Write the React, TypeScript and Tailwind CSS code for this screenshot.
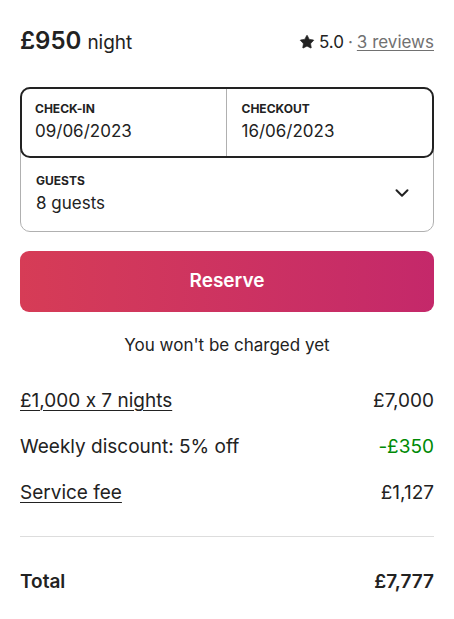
import { Star, ChevronDown } from "lucide-react";

const rows = [
  { label: "£1,000 x 7 nights", amount: "£7,000", link: true },
  { label: "Weekly discount: 5% off", amount: "-£350", discount: true },
  { label: "Service fee", amount: "£1,127", link: true },
];

export default function App() {
  return (
    <div className="min-h-screen bg-white px-5 pt-6 text-[#222222] font-['Inter','Noto_Sans',sans-serif] [font-feature-settings:'calt'_0]">
      <div className="flex items-end justify-between h-[35px]">
        <div className="flex items-baseline gap-[6px]">
          <span className="text-[24px] font-semibold">£950</span>
          <span className="text-[19px]">night</span>
        </div>
        <div className="flex items-center gap-1 text-[17px] pb-[4px]">
          <Star size={16} fill="#222222" strokeWidth={1} />
          <span>5.0</span>
          <span className="text-[#717171]">·</span>
          <span className="text-[#717171] underline underline-offset-2">3 reviews</span>
        </div>
      </div>

      <div className="mt-[28px] rounded-[10px] border border-[#b0b0b0]">
        <div className="-m-px flex h-[71px] rounded-[10px] border-2 border-[#222222]">
          <div className="flex-1 border-r border-[#b0b0b0] pl-[13px] pt-[11px]">
            <div className="text-[12px] font-bold">CHECK-IN</div>
            <div className="mt-[1px] text-[17px]">09/06/2023</div>
          </div>
          <div className="flex-1 pl-[15px] pt-[11px]">
            <div className="text-[12px] font-bold">CHECKOUT</div>
            <div className="mt-[1px] text-[17px]">16/06/2023</div>
          </div>
        </div>
        <div className="flex h-[74px] items-center justify-between pl-[15px] pr-[20px]">
          <div>
            <div className="text-[12px] font-bold">GUESTS</div>
            <div className="mt-[1px] text-[17px]">8 guests</div>
          </div>
          <ChevronDown size={22} strokeWidth={2.2} className="-mt-[2px]" />
        </div>
      </div>

      <button className="mt-[19px] flex h-[61px] w-full items-center justify-center rounded-[9px] bg-gradient-to-r from-[#d63c56] to-[#c4286a] text-[19px] font-semibold text-white">
        Reserve
      </button>

      <p className="mt-[21px] text-center text-[17px]">You won't be charged yet</p>

      <div className="mt-[29px] flex flex-col gap-[21px]">
        {rows.map((r) => (
          <div key={r.label} className="flex justify-between text-[19px] leading-[25px]">
            <span className={r.link ? "underline underline-offset-[3px] decoration-1" : ""}>{r.label}</span>
            <span className={r.discount ? "text-[#008a05]" : ""}>{r.amount}</span>
          </div>
        ))}
      </div>

      <div className="mt-[31px] border-t border-[#dddddd]" />

      <div className="mt-[32px] flex justify-between text-[19px] font-semibold leading-[25px]">
        <span>Total</span>
        <span>£7,777</span>
      </div>
    </div>
  );
}
